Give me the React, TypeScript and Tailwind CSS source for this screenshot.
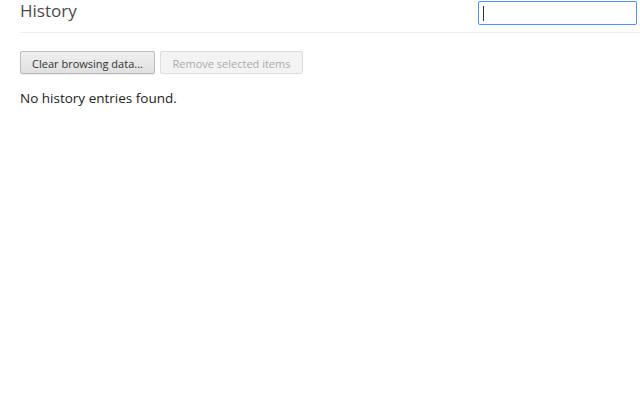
export default function App() {
  return (
    <div className="h-[400px] w-[640px] bg-white font-['Open_Sans',sans-serif] text-[#303030]">
      {/* Header */}
      <header className="ml-[20px] flex h-[33px] items-start justify-between border-b border-[#eeeeee]">
        <h1 className="text-[17px] font-normal leading-[22px] text-[#4a4a4a]">History</h1>
        <div className="mr-[3px] mt-[1px] flex h-[24px] w-[159px] items-center rounded-[2px] border border-[#4d90fe] bg-white px-[4px]">
          <div className="h-[15px] w-[1px] bg-[#333]" />
        </div>
      </header>

      {/* Actions */}
      <div className="ml-[20px] mt-[18px] flex gap-[5px]">
        <button
          type="button"
          className="h-[23px] w-[135px] rounded-[2px] border border-[#bcbcbc] bg-gradient-to-b from-[#f0f0f0] to-[#e0e0e0] pt-[1px] text-[11px] leading-none text-[#333] shadow-[0_1px_0_rgba(0,0,0,0.08)]"
        >
          Clear browsing data...
        </button>
        <button
          type="button"
          disabled
          className="h-[23px] w-[143px] rounded-[2px] border border-[#dcdcdc] bg-[#f3f3f3] pt-[1px] text-[11px] leading-none text-[#aaaaaa]"
        >
          Remove selected items
        </button>
      </div>

      <p className="ml-[20px] mt-[15px] text-[13.5px] leading-[18px] text-[#222]">No history entries found.</p>
    </div>
  );
}
